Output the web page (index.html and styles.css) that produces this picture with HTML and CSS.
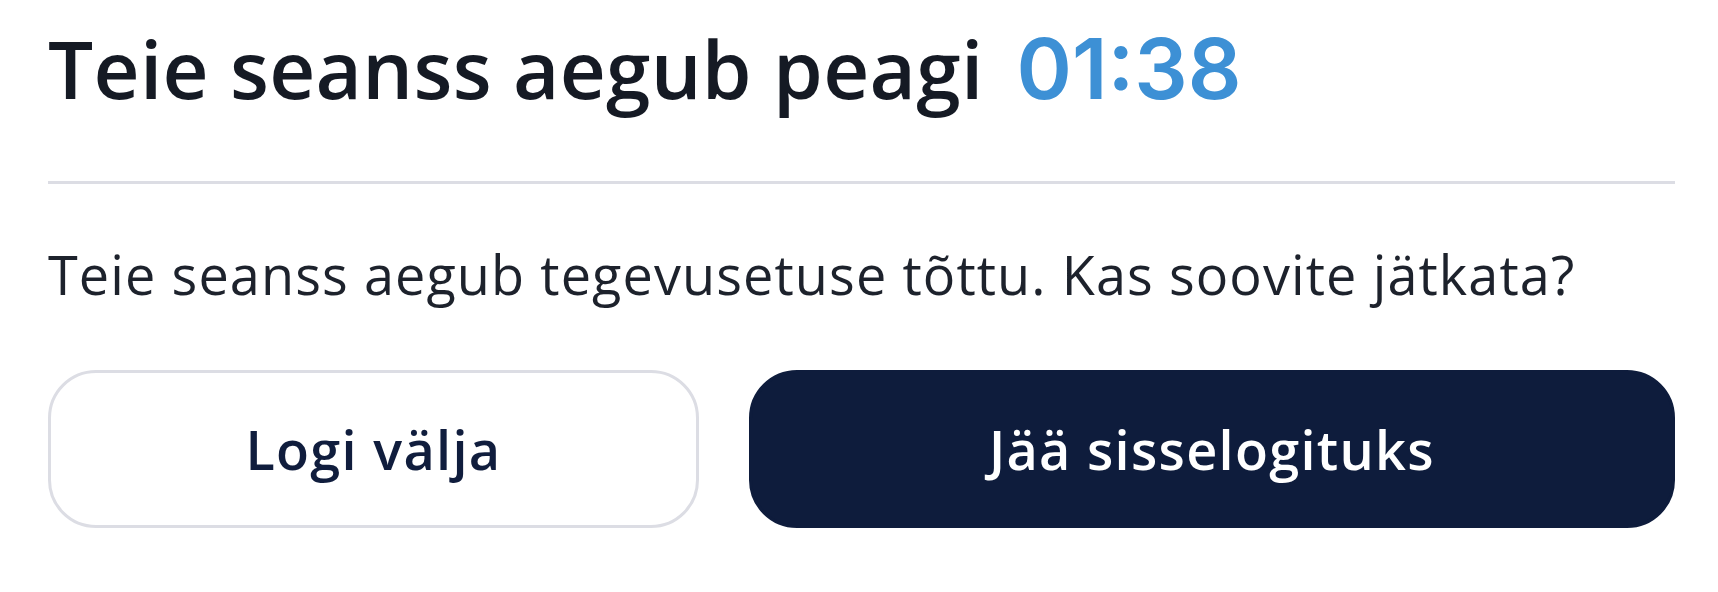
FILE: index.html
```html
<!DOCTYPE html>
<html lang="et">
<head>
<meta charset="utf-8">
<title>Seanss aegub</title>
<link rel="stylesheet" href="styles.css">
</head>
<body>
<div class="dialog">
  <div class="header">
    <h2 class="title">Teie seanss aegub peagi</h2>
    <span class="timer">01:38</span>
  </div>
  <hr class="divider">
  <p class="message">Teie seanss aegub tegevusetuse tõttu. Kas soovite jätkata?</p>
  <div class="actions">
    <button class="btn btn-secondary" type="button">Logi välja</button>
    <button class="btn btn-primary" type="button">Jää sisselogituks</button>
  </div>
</div>
</body>
</html>
```
FILE: styles.css
```css
html, body {
  margin: 0;
  padding: 0;
  background: #ffffff;
}

body {
  font-family: "Open Sans", "Noto Sans", sans-serif;
}

.dialog {
  width: 1627px;
  padding: 20px 0 0 48px;
}

.header {
  display: flex;
  align-items: baseline;
  gap: 33px;
  height: 96px;
}

.title {
  margin: 0;
  font-size: 80px;
  line-height: 96px;
  font-weight: 600;
  color: #151a24;
  letter-spacing: 0.3px;
}

.timer {
  font-family: Inter, "Liberation Sans", sans-serif;
  font-size: 84px;
  line-height: 96px;
  font-weight: 600;
  color: #3d90d5;
}

.divider {
  margin: 65px 0 0;
  border: 0;
  border-top: 3px solid #dcdde4;
  height: 0;
}

.message {
  margin: 52px 0 58px;
  font-size: 54px;
  line-height: 76px;
  font-weight: 400;
  color: #1d222c;
  letter-spacing: 1.1px;
}

.actions {
  display: flex;
  gap: 50px;
}

.btn {
  height: 158px;
  border-radius: 48px;
  font-family: "Open Sans", "Noto Sans", sans-serif;
  font-size: 54px;
  font-weight: 600;
  letter-spacing: 1.3px;
  cursor: pointer;
}

.btn-secondary {
  width: 40%;
  flex: none;
  background: #ffffff;
  border: 3px solid #dcdde4;
  color: #101d3d;
}

.btn-primary {
  flex: 1;
  background: #0e1c3c;
  border: 3px solid #0e1c3c;
  color: #ffffff;
}
```
